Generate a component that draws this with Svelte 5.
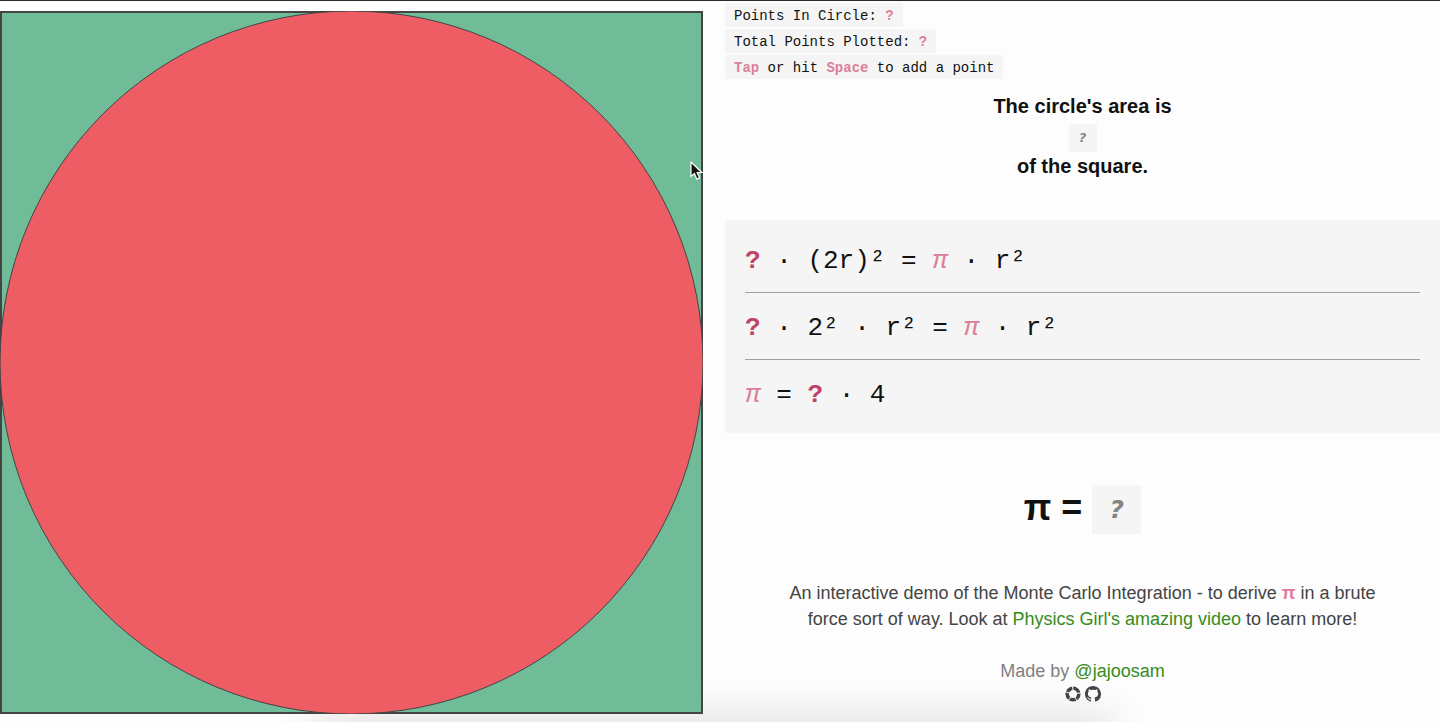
<script>
  let inside = $state(0);
  let total = $state(0);
  let points = $state([]);

  const ratio = $derived(total ? (inside / total).toFixed(3) : '?');
  const estimate = $derived(total ? ((inside / total) * 4).toFixed(3) : '?');

  function addPoint() {
    const x = Math.random() * 2 - 1;
    const y = Math.random() * 2 - 1;
    total += 1;
    if (x * x + y * y <= 1) inside += 1;
    points.push({ x: 351.5 + x * 350, y: 351.5 + y * 350 });
  }

  function onKey(event) {
    if (event.code === 'Space') {
      event.preventDefault();
      addPoint();
    }
  }
</script>

<svelte:window onkeydown={onKey} />

<main>
  <button class="board" aria-label="Add a point" onclick={addPoint}>
    <svg class="plot" viewBox="0 0 703 703" aria-hidden="true">
      <rect x="1" y="1" width="701" height="701" fill="#70bb98" stroke="#444" stroke-width="2" />
      <circle cx="351.5" cy="351.5" r="351.5" fill="#ee5d63" stroke="#444" stroke-width="1" />
      {#each points as p}
        <circle cx={p.x} cy={p.y} r="3" fill="#111" />
      {/each}
    </svg>
  </button>

  <section class="info">
    <div class="stats">
      <div class="tag">Points In Circle: <b>{total ? inside : '?'}</b></div>
      <div class="tag">Total Points Plotted: <b>{total || '?'}</b></div>
      <div class="tag"><b>Tap</b> or hit <b>Space</b> to add a point</div>
    </div>

    <h3>
      <span>The circle's area is</span>
      <em class="box">{ratio}</em>
      <span>of the square.</span>
    </h3>

    <div class="math">
      <div class="row"><b>{ratio}</b> · (2r)² = <i>π</i> · r²</div>
      <div class="row"><b>{ratio}</b> · 2² · r² = <i>π</i> · r²</div>
      <div class="row"><i>π</i> = <b>{ratio}</b> · 4</div>
    </div>

    <h1><span>π =</span><em class="box">{estimate}</em></h1>

    <p class="about">
      An interactive demo of the Monte Carlo Integration - to derive <b class="pi">π</b> in a brute force sort of way.
      Look at <a href="#video">Physics Girl's amazing video</a> to learn more!
    </p>

    <footer>
      <div>Made by <a href="#author">@jajoosam</a></div>
      <div class="icons">
        <a href="#home" aria-label="Website">
          <svg viewBox="0 0 16 16" width="16" height="16">
            <circle cx="8" cy="8" r="5.8" fill="none" stroke="#444" stroke-width="3.6" />
            <path d="M8.2 5 7.4 0M11 7.4 16 7M9.8 11l2.4 4.4M6 10.8 3 14.8M5 7.4 0 5.4" stroke="#fdfdfd" stroke-width="1" />
          </svg>
        </a>
        <a href="#source" aria-label="GitHub">
          <svg viewBox="0 0 16 16" width="16" height="16">
            <path
              fill="#444"
              d="M8 0C3.58 0 0 3.58 0 8c0 3.54 2.29 6.53 5.47 7.59.4.07.55-.17.55-.38 0-.19-.01-.82-.01-1.49-2.01.37-2.53-.49-2.69-.94-.09-.23-.48-.94-.82-1.13-.28-.15-.68-.52-.01-.53.63-.01 1.08.58 1.23.82.72 1.21 1.87.87 2.33.66.07-.52.28-.87.51-1.07-1.78-.2-3.64-.89-3.64-3.95 0-.87.31-1.59.82-2.15-.08-.2-.36-1.02.08-2.12 0 0 .67-.21 2.2.82.64-.18 1.32-.27 2-.27s1.36.09 2 .27c1.53-1.04 2.2-.82 2.2-.82.44 1.1.16 1.92.08 2.12.51.56.82 1.27.82 2.15 0 3.07-1.87 3.75-3.65 3.95.29.25.54.73.54 1.48 0 1.07-.01 1.93-.01 2.2 0 .21.15.46.55.38A8.01 8.01 0 0 0 16 8c0-4.42-3.58-8-8-8z"
            />
          </svg>
        </a>
      </div>
    </footer>
  </section>

  <svg class="cursor" viewBox="0 0 14 20" width="14" height="20" aria-hidden="true">
    <path d="M1 1v14.5l3.4-3 2.4 5.6 2.8-1.2-2.4-5.4h4.6z" fill="#111" stroke="#fff" stroke-width="1.2" />
  </svg>
  <div class="shade"></div>
</main>

<style>
  :global(body) {
    margin: 0;
    background: #fdfdfd;
  }

  main {
    position: relative;
    box-sizing: border-box;
    min-height: 100vh;
    overflow: hidden;
    border-top: 1px solid #29292d;
    display: grid;
    grid-template-columns: 1fr 1fr;
    column-gap: 10px;
    align-items: start;
    font-family: 'Liberation Sans', Arial, sans-serif;
    color: #111;
  }

  .board {
    appearance: none;
    border: 0;
    background: none;
    padding: 0;
    margin: 10px 12px 0 0;
    position: relative;
    z-index: 1;
  }

  .plot {
    display: block;
    width: 100%;
  }

  .info {
    display: flex;
    flex-direction: column;
    min-width: 0;
    position: relative;
    z-index: 1;
  }

  .stats {
    display: flex;
    flex-direction: column;
    align-items: flex-start;
    gap: 2px;
    padding-top: 2px;
    font: 14px/22px 'Liberation Mono', 'Courier New', monospace;
  }

  .tag {
    background: #f5f5f5;
    padding: 2px 9px 0;
  }

  .tag b {
    color: #dc7f9b;
  }

  h3 {
    margin: 12px 0 0;
    display: flex;
    flex-direction: column;
    align-items: center;
    font-size: 20px;
    line-height: 30px;
  }

  .box {
    box-sizing: border-box;
    background: #f5f5f5;
    color: #858585;
    font-family: 'DejaVu Sans', sans-serif;
    text-align: center;
  }

  h3 .box {
    min-width: 28px;
    margin-top: 3px;
    padding: 0 8px;
    font-size: 13px;
    line-height: 28px;
  }

  h3 span:last-child {
    line-height: 28px;
  }

  .math {
    margin-top: 40px;
    padding: 6px 20px 7px;
    background: #f5f5f5;
    font: 26px/62px 'Liberation Mono', 'Courier New', monospace;
  }

  .row {
    padding-top: 4px;
  }

  .row + .row {
    border-top: 1px solid #a0a0a0;
  }

  .row b {
    color: #c0446a;
  }

  .row i {
    color: #dc7f9b;
  }

  h1 {
    margin: 52px 0 0;
    display: flex;
    justify-content: center;
    gap: 10px;
    font-size: 36px;
    line-height: 45px;
  }

  h1 .box {
    min-width: 49px;
    padding: 0 16px;
    font-size: 25px;
    line-height: 49px;
  }

  .about {
    width: 600px;
    max-width: 100%;
    margin: 46px auto 0;
    font-size: 18px;
    line-height: 26px;
    text-align: center;
    color: #444;
  }

  .pi {
    color: #dc7f9b;
  }

  a {
    color: #358c1c;
    text-decoration: none;
  }

  footer {
    margin-top: 26px;
    font-size: 18px;
    line-height: 26px;
    text-align: center;
    color: #808080;
  }

  .icons {
    display: flex;
    justify-content: center;
    gap: 4px;
    margin-top: 2px;
  }

  .icons a,
  .icons svg {
    display: block;
  }

  .cursor {
    position: absolute;
    z-index: 2;
    left: 690px;
    top: 160px;
  }

  .shade {
    position: absolute;
    left: 22%;
    right: 23%;
    bottom: -20px;
    height: 20px;
    box-shadow: 0 0 40px 4px rgba(0, 0, 0, 0.14);
  }
</style>
